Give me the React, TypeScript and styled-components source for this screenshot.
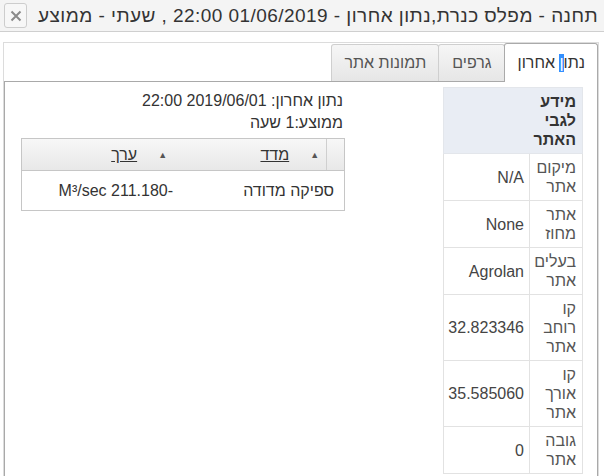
import styled, { createGlobalStyle } from 'styled-components';

const GlobalStyle = createGlobalStyle`
  html, body {
    margin: 0;
    padding: 0;
    background: #fff;
  }
  body {
    font-family: "Liberation Sans", Arial, "DejaVu Sans", sans-serif;
    color: #333;
  }
`;

interface ISiteRow {
  label: string;
  value: string;
}

const siteRows: ISiteRow[] = [
  { label: 'מיקום אתר', value: 'N/A' },
  { label: 'אתר מחוז', value: 'None' },
  { label: 'בעלים אתר', value: 'Agrolan' },
  { label: 'קו רוחב אתר', value: '32.823346' },
  { label: 'קו אורך אתר', value: '35.585060' },
  { label: 'גובה אתר', value: '0' },
];

export default function App() {
  return (
    <Dialog>
      <GlobalStyle />
      <TitleBar>
        <Title>תחנה - מפלס כנרת,נתון אחרון - 01/06/2019 22:00 , שעתי - ממוצע</Title>
        <CloseButton aria-label="close">
          <svg width="12" height="12" viewBox="0 0 12 12">
            <path d="M1.5 1.5 L10.5 10.5 M10.5 1.5 L1.5 10.5" stroke="#8a8a8a" strokeWidth="2" />
          </svg>
        </CloseButton>
      </TitleBar>

      <Body>
        <TabsWidget>
          <TabStrip>
            <Tab active>
              נתו<Selected>ן</Selected>&nbsp;אחרון
            </Tab>
            <Tab>גרפים</Tab>
            <Tab>תמונות אתר</Tab>
          </TabStrip>

          <Panel>
            <SiteTable>
              <colgroup>
                <col style={{ width: 53 }} />
                <col style={{ width: 86 }} />
              </colgroup>
              <thead>
                <tr>
                  <HeadCell side="right">מידע לגבי האתר</HeadCell>
                  <HeadCell side="left" />
                </tr>
              </thead>
              <tbody>
                {siteRows.map(row => (
                  <tr key={row.label}>
                    <LabelCell>{row.label}</LabelCell>
                    <ValueCell>{row.value}</ValueCell>
                  </tr>
                ))}
              </tbody>
            </SiteTable>

            <LastData>
              <InfoLine>נתון אחרון: 2019/06/01 22:00</InfoLine>
              <InfoLine>ממוצע:1 שעה</InfoLine>
              <Grid>
                <GridHeader>
                  <CornerCell />
                  <SortCell>
                    <SortArrow>▲</SortArrow>
                    <SortLabel>מדד</SortLabel>
                  </SortCell>
                  <SortCell>
                    <SortArrow>▲</SortArrow>
                    <SortLabel>ערך</SortLabel>
                  </SortCell>
                </GridHeader>
                <GridRow>
                  <DataCell width={171} pad={10}>ספיקה מדודה</DataCell>
                  <DataCell width={153} pad={1}>-211.180 M³/sec</DataCell>
                </GridRow>
              </Grid>
            </LastData>
          </Panel>
        </TabsWidget>
      </Body>
    </Dialog>
  );
}

const Dialog = styled.div`
  width: 604px;
  height: 476px;
  overflow: hidden;
  display: flex;
  flex-direction: column;
  background: #fff;
`;

const TitleBar = styled.div`
  height: 31px;
  flex-shrink: 0;
  display: flex;
  direction: rtl;
  align-items: center;
  justify-content: space-between;
  padding: 0 6px 0 4px;
  background: #f4f4f4;
  border-bottom: 1px solid #cfcfcf;
`;

const Title = styled.div`
  font-size: 19px;
  letter-spacing: 0.45px;
  color: #333;
  white-space: nowrap;
  padding-top: 1px;
`;

const CloseButton = styled.button`
  width: 23px;
  height: 25px;
  padding: 0;
  display: flex;
  align-items: center;
  justify-content: center;
  background: #f7f7f7;
  border: 1px solid #cdcdcd;
  border-radius: 3px;
`;

const Body = styled.div`
  flex: 1;
  padding: 10px 5px 0 3px;
  min-height: 0;
`;

const TabsWidget = styled.div`
  direction: rtl;
  height: 100%;
  display: flex;
  flex-direction: column;
  border: 1px solid #dcdcdc;
  border-bottom: none;
`;

const TabStrip = styled.div`
  display: flex;
  align-items: flex-end;
  height: 38px;
`;

const Tab = styled.div<{ active?: boolean }>`
  height: ${props => (props.active ? 39 : 37)}px;
  box-sizing: border-box;
  display: flex;
  align-items: center;
  padding: 0 12px 0 13px;
  margin-bottom: ${props => (props.active ? -1 : 0)}px;
  font-size: 16px;
  color: ${props => (props.active ? '#333' : '#555')};
  background: ${props =>
    props.active ? '#fff' : 'linear-gradient(#f6f6f6, #e6e6e6)'};
  border: 1px solid ${props => (props.active ? '#aaa' : '#cfcfcf')};
  border-bottom: none;
  border-radius: 3px 3px 0 0;
  position: relative;
  z-index: ${props => (props.active ? 1 : 0)};
  white-space: nowrap;
  & + & {
    margin-right: -1px;
  }
`;

const Selected = styled.span`
  background: #3390ff;
  color: #fff;
`;

const Panel = styled.div`
  flex: 1;
  display: flex;
  justify-content: space-between;
  align-items: flex-start;
  padding: 5px 14px 0 16px;
  border: 1px solid #a9a9a9;
  border-bottom: none;
`;

const SiteTable = styled.table`
  width: 139px;
  table-layout: fixed;
  border-collapse: collapse;
  font-size: 16px;
  line-height: 19px;
`;

const HeadCell = styled.th<{ side: 'left' | 'right' }>`
  text-align: right;
  vertical-align: top;
  font-weight: bold;
  padding: 4px 6px;
  background: #e9edf4;
  border: 1px solid #e3e6eb;
  border-${props => (props.side === 'right' ? 'left' : 'right')}: none;
  color: #333;
`;

const LabelCell = styled.td`
  text-align: right;
  vertical-align: top;
  padding: 4px 6px;
  border: 1px solid #e2e2e2;
  color: #555;
`;

const ValueCell = styled.td`
  text-align: right;
  vertical-align: middle;
  padding: 4px 5px;
  border: 1px solid #e2e2e2;
  color: #444;
`;

const LastData = styled.div`
  width: 324px;
  padding-top: 3px;
  font-size: 16px;
`;

const InfoLine = styled.div`
  line-height: 22px;
  padding-right: 2px;
`;

const Grid = styled.div`
  margin-top: 4px;
  border: 1px solid #c6c6c6;
`;

const GridHeader = styled.div`
  display: flex;
  height: 31px;
  background: linear-gradient(#f7f7f7, #e8e8e8);
  border-bottom: 1px solid #c6c6c6;
`;

const CornerCell = styled.div`
  width: 17px;
  border-left: 1px solid #cfcfcf;
`;

const SortCell = styled.div`
  width: 153px;
  display: flex;
  align-items: center;
  padding-right: 7px;
  box-sizing: border-box;
`;

const SortArrow = styled.span`
  font-size: 9px;
  color: #555;
  margin-left: 21px;
`;

const SortLabel = styled.span`
  text-decoration: underline;
  color: #333;
`;

const GridRow = styled.div`
  display: flex;
  height: 39px;
  align-items: center;
`;

const DataCell = styled.div<{ width: number; pad: number }>`
  width: ${props => props.width}px;
  box-sizing: border-box;
  padding-right: ${props => props.pad}px;
  color: #333;
  white-space: nowrap;
`;
